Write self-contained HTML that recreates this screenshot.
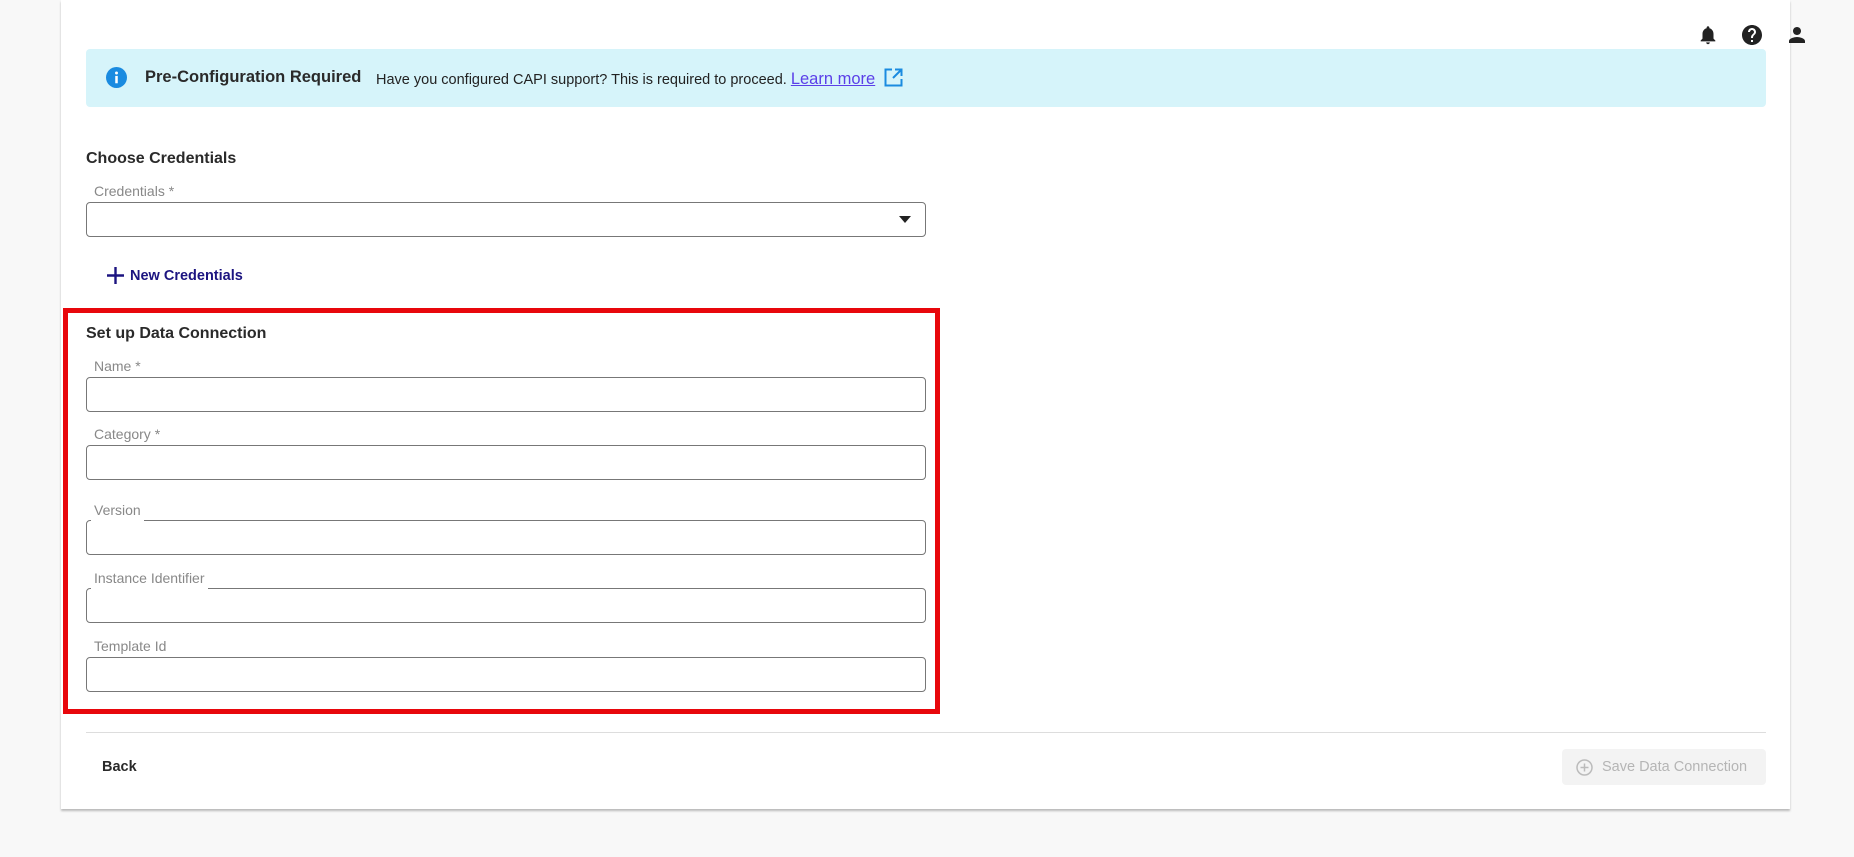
<!DOCTYPE html>
<html><head><meta charset="utf-8">
<style>
*{box-sizing:border-box;margin:0;padding:0}
body{width:1854px;height:857px;background:#f8f8f8;font-family:"Liberation Sans",sans-serif;position:relative;overflow:hidden;color:#222}
.card{position:absolute;left:61px;top:0;width:1729px;height:809px;background:#fff;box-shadow:0 2px 2px rgba(0,0,0,.25)}
.abs{position:absolute}
.banner{left:86px;top:49px;width:1680px;height:58px;background:#d6f4fa;border-radius:4px}
.h{font-size:16px;font-weight:bold;color:#2a2a2a}
.lbl{position:absolute;font-size:14px;color:#888;background:#fff;padding:0 3px;line-height:16px}
.inp{position:absolute;left:86px;width:840px;height:35px;border:1px solid #777;border-radius:4px}
</style></head><body>
<div class="card"></div>
<svg class="abs" style="left:1697px;top:24px" width="22" height="22" viewBox="0 0 24 24"><path fill="#222" d="M12 22c1.1 0 2-.9 2-2h-4c0 1.1.9 2 2 2zm6-6v-5c0-3.07-1.63-5.64-4.5-6.32V4c0-.83-.67-1.5-1.5-1.5s-1.5.67-1.5 1.5v.68C7.64 5.36 6 7.92 6 11v5l-2 2v1h16v-1l-2-2z"/></svg>
<svg class="abs" style="left:1740px;top:23px" width="24" height="24" viewBox="0 0 24 24"><path fill="#222" d="M12 2C6.48 2 2 6.48 2 12s4.48 10 10 10 10-4.48 10-10S17.52 2 12 2zm1 17h-2v-2h2v2zm2.07-7.75l-.9.92C13.45 12.9 13 13.5 13 15h-2v-.5c0-1.1.45-2.1 1.17-2.83l1.24-1.26c.37-.36.59-.86.59-1.41 0-1.1-.9-2-2-2s-2 .9-2 2H8c0-2.21 1.79-4 4-4s4 1.79 4 4c0 .88-.36 1.68-.93 2.25z"/></svg>
<svg class="abs" style="left:1785px;top:23px" width="24" height="24" viewBox="0 0 24 24"><path fill="#222" d="M12 12c2.21 0 4-1.79 4-4s-1.79-4-4-4-4 1.79-4 4 1.79 4 4 4zm0 2c-2.67 0-8 1.34-8 4v2h16v-2c0-2.66-5.33-4-8-4z"/></svg>

<div class="abs banner"></div>
<svg class="abs" style="left:106px;top:67px" width="21" height="21" viewBox="0 0 20 20"><circle cx="10" cy="10" r="10" fill="#1a8be0"/><rect x="8.8" y="8.5" width="2.4" height="7" fill="#fff"/><circle cx="10" cy="5.7" r="1.4" fill="#fff"/></svg>
<div class="abs" style="left:145px;top:68px;font-size:16.5px;font-weight:bold;color:#2a2a2a">Pre-Configuration Required</div>
<div class="abs" style="left:376px;top:70px;font-size:14.5px;color:#222">Have you configured CAPI support? This is required to proceed. <span style="color:#5b3fe8;text-decoration:underline;font-size:16.5px">Learn more</span></div>
<svg class="abs" style="left:884px;top:68px" width="19" height="19" viewBox="0 0 19 19" fill="none" stroke="#1a8be0" stroke-width="2"><path d="M8 1.5H1.5v16h16V11"/><path d="M11 1.5h6.5V8M17.5 1.5L9 10"/></svg>

<div class="abs h" style="left:86px;top:150px">Choose Credentials</div>
<div class="inp" style="top:202px"></div>
<div class="lbl" style="left:91px;top:183px;padding-bottom:3px">Credentials *</div>
<svg class="abs" style="left:899px;top:216px" width="12" height="7" viewBox="0 0 12 7"><path d="M0 0h12L6 7z" fill="#222"/></svg>

<svg class="abs" style="left:107px;top:267px" width="17" height="17" viewBox="0 0 17 17"><path d="M8.5 0v17M0 8.5h17" stroke="#1c1480" stroke-width="2.4"/></svg>
<div class="abs" style="left:130px;top:268px;font-size:14.5px;font-weight:bold;color:#1c1480">New Credentials</div>

<div class="abs" style="left:63px;top:308px;width:877px;height:406px;border:5px solid #e8070c"></div>
<div class="abs h" style="left:86px;top:325px">Set up Data Connection</div>

<div class="inp" style="top:377px"></div><div class="lbl" style="left:91px;top:358px;padding-bottom:3px">Name *</div>
<div class="inp" style="top:445px"></div><div class="lbl" style="left:91px;top:426px;padding-bottom:3px">Category *</div>
<div class="inp" style="top:520px"></div><div class="lbl" style="left:91px;top:502px;padding-bottom:3px">Version</div>
<div class="inp" style="top:588px"></div><div class="lbl" style="left:91px;top:570px;padding-bottom:3px">Instance Identifier</div>
<div class="inp" style="top:657px"></div><div class="lbl" style="left:91px;top:638px;padding-bottom:3px">Template Id</div>

<div class="abs" style="left:86px;top:732px;width:1680px;height:1px;background:#ddd"></div>
<div class="abs" style="left:102px;top:759px;font-size:14.5px;font-weight:bold;color:#2a2a2a">Back</div>
<div class="abs" style="left:1562px;top:749px;width:204px;height:36px;background:#f3f3f3;border-radius:4px"></div>
<svg class="abs" style="left:1576px;top:759px" width="17" height="17" viewBox="0 0 17 17" fill="none" stroke="#bbb" stroke-width="1.5"><circle cx="8.5" cy="8.5" r="7.5"/><path d="M8.5 4.5v8M4.5 8.5h8"/></svg>
<div class="abs" style="left:1602px;top:759px;font-size:14.5px;color:#b5b5b5">Save Data Connection</div>
</body></html>
